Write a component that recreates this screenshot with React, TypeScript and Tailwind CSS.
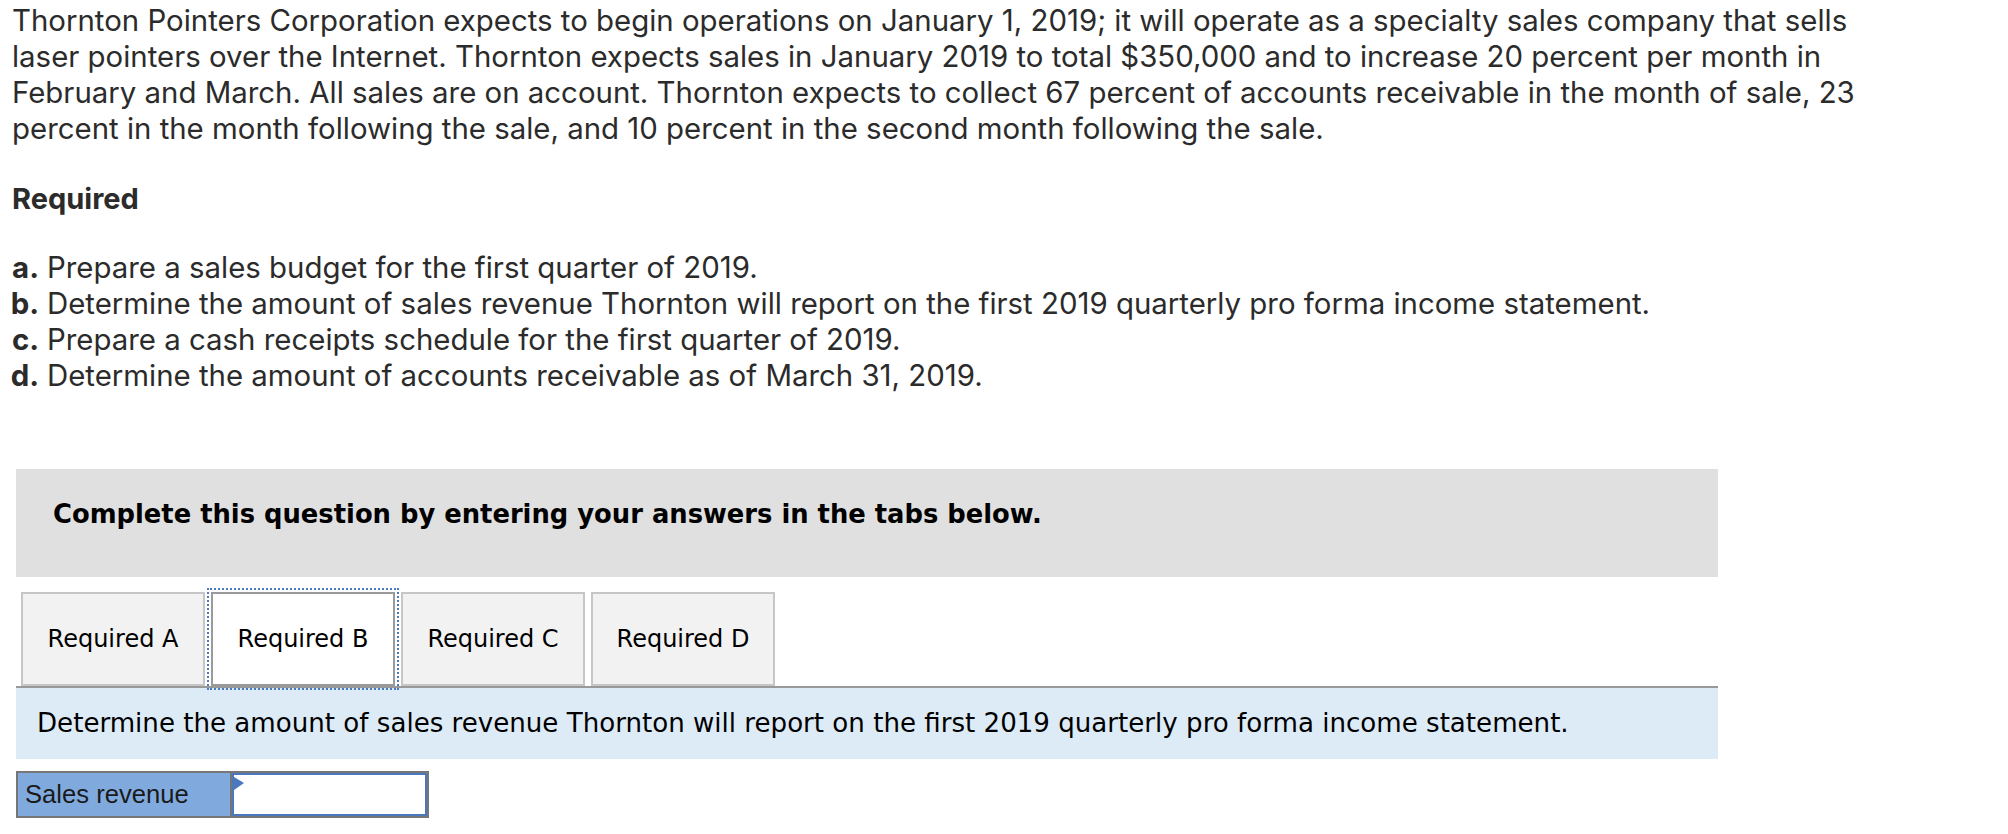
import React from "react";

const tabs = ["Required A", "Required B", "Required C", "Required D"];

export default function App() {
  return (
    <div className="w-[2008px] h-[834px] bg-white overflow-hidden relative">
      <div className="pl-[12px] pt-[3px] font-['Inter',sans-serif] text-[#2b2b2b]">
        <p className="text-[29.4px] leading-[36px]">
          <span className="block">Thornton Pointers Corporation expects to begin operations on January 1, 2019; it will operate as a specialty sales company that sells</span>
          <span className="block">laser pointers over the Internet. Thornton expects sales in January 2019 to total $350,000 and to increase 20 percent per month in</span>
          <span className="block">February and March. All sales are on account. Thornton expects to collect 67 percent of accounts receivable in the month of sale, 23</span>
          <span className="block">percent in the month following the sale, and 10 percent in the second month following the sale.</span>
        </p>
        <h3 className="mt-[34px] text-[29px] leading-[36px] font-bold">Required</h3>
        <ol className="mt-[33px] -ml-[7px] text-[29.4px] leading-[36px]">
          {[
            ["a.", "Prepare a sales budget for the first quarter of 2019."],
            ["b.", "Determine the amount of sales revenue Thornton will report on the first 2019 quarterly pro forma income statement."],
            ["c.", "Prepare a cash receipts schedule for the first quarter of 2019."],
            ["d.", "Determine the amount of accounts receivable as of March 31, 2019."],
          ].map(([m, t]) => (
            <li key={m} className="flex">
              <span className="w-[42px] shrink-0 text-right pr-[8px] font-bold">{m}</span>
              <span>{t}</span>
            </li>
          ))}
        </ol>
      </div>

      <div className="ml-[16px] w-[1702px] font-['DejaVu_Sans',Verdana,sans-serif]">
        <div className="mt-[75px] h-[108px] bg-[#e0e0e0] pl-[37px] pt-[30px]">
          <span className="block text-[25.8px] leading-[30px] font-bold text-black">Complete this question by entering your answers in the tabs below.</span>
        </div>

        <div className="mt-[15px] flex items-end gap-[6px] pl-[5px]">
          {tabs.map((t, i) => (
            <div
              key={t}
              className={
                i === 1
                  ? "w-[184px] h-[94px] flex items-center justify-center border-2 border-[#9a9a9a] bg-white text-[24px] text-black outline-2 outline-dotted outline-[#4a7bbf] outline-offset-[2px]"
                  : "w-[184px] h-[94px] flex items-center justify-center border-2 border-[#c6c6c6] bg-[#f2f2f2] text-[24px] text-black"
              }
            >
              {t}
            </div>
          ))}
        </div>

        <div className="border-t-2 border-[#999999] bg-[#ddebf7] h-[73px] pl-[21px] flex items-center">
          <span className="text-[26.1px] text-black">Determine the amount of sales revenue Thornton will report on the first 2019 quarterly pro forma income statement.</span>
        </div>

        <div className="mt-[12px] flex w-[413px] h-[47px] border-2 border-[#767676] font-['Liberation_Sans',Arial,sans-serif]">
          <div className="w-[214px] bg-[#80aade] border-r-2 border-[#767676] flex items-center pl-[7px] text-[25.6px] text-[#1a1a1a]">
            Sales revenue
          </div>
          <div className="relative flex-1 bg-white border-2 border-[#4a78bf]">
            <svg className="absolute left-0 top-[2px]" width="11" height="14" viewBox="0 0 11 14">
              <polygon points="0,0 10,6 0,13" fill="#4a78bf" />
            </svg>
          </div>
        </div>
      </div>
    </div>
  );
}
